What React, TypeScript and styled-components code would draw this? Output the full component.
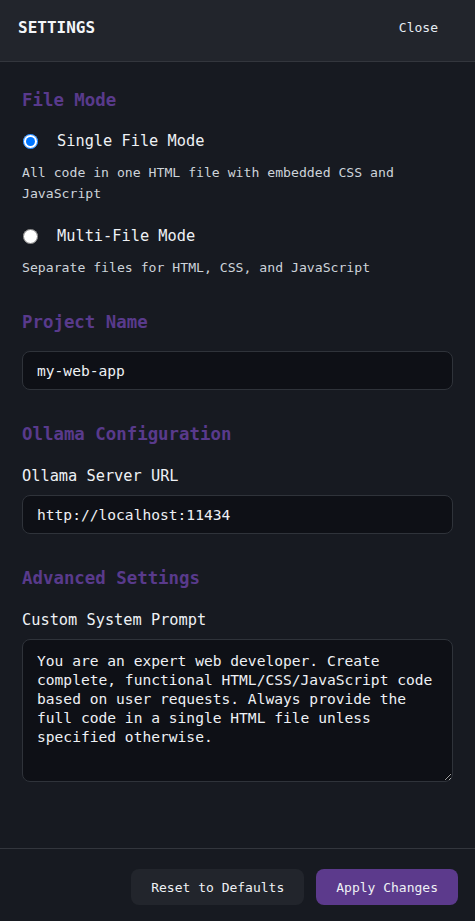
import React, { useState } from "react";
import styled, { createGlobalStyle } from "styled-components";

const Global = createGlobalStyle`
  html, body { margin: 0; padding: 0; background: #171a21; }
  body { font-family: "DejaVu Sans Mono", "Liberation Mono", monospace; }
  * { box-sizing: border-box; }
`;

const Shell = styled.div`
  display: flex;
  flex-direction: column;
  height: 100vh;
  background: #171a21;
  color: #e6edf3;
`;

const Header = styled.header`
  display: flex;
  align-items: center;
  justify-content: space-between;
  height: 62px;
  padding: 0 18px;
  background: #22252c;
  border-bottom: 1px solid #33363d;
  flex-shrink: 0;
`;

const HeaderTitle = styled.h1`
  margin: 0;
  font-size: 16px;
  font-weight: 700;
  letter-spacing: 0;
  color: #f3f5f8;
  transform: translateY(-3px);
`;

const CloseButton = styled.button`
  background: transparent;
  border: none;
  color: #e6edf3;
  font-family: inherit;
  font-size: 13px;
  padding: 6px 19px;
  cursor: pointer;
  transform: translateY(-3px);
`;

const Body = styled.main`
  flex: 1;
  overflow: auto;
  padding: 27px 22px 24px;
  display: flex;
  flex-direction: column;
`;

const Section = styled.section`
  display: flex;
  flex-direction: column;
  & + & { margin-top: 33px; }
`;

const SectionTitle = styled.h2`
  margin: 0 0 18px;
  font-size: 17.4px;
  line-height: 22px;
  font-weight: 700;
  color: #593a8c;
`;

const RadioRow = styled.label`
  display: flex;
  align-items: center;
  gap: 19px;
  height: 24px;
  font-size: 15.3px;
  color: #eef1f5;
  cursor: pointer;
`;

const Radio = styled.input`
  width: 15px;
  height: 15px;
  margin: 0 0 0 1px;
  accent-color: #0075ff;
`;

const Description = styled.p<{ $last?: boolean }>`
  margin: 9px 0 ${(p) => (p.$last ? "0" : "20px")};
  font-size: 13.15px;
  line-height: 21px;
  color: #cdd3da;
`;

const FieldLabel = styled.label`
  display: block;
  margin: 3px 0 9px;
  font-size: 15.3px;
  line-height: 20px;
  color: #eef1f5;
`;

const TextInput = styled.input`
  width: 100%;
  height: 39px;
  padding: 0 14px;
  background: #0e1016;
  border: 1px solid #2f333a;
  border-radius: 8px;
  color: #eef1f5;
  font-family: inherit;
  font-size: 14.6px;
  outline: none;
`;

const TextArea = styled.textarea`
  width: 100%;
  height: 143px;
  padding: 11px 14px;
  background: #0e1016;
  border: 1px solid #2f333a;
  border-radius: 8px;
  color: #eef1f5;
  font-family: inherit;
  font-size: 14.6px;
  line-height: 19px;
  outline: none;
  resize: vertical;
  display: block;
`;

const Footer = styled.footer`
  flex-shrink: 0;
  display: flex;
  justify-content: flex-end;
  gap: 12px;
  padding: 20px 17px 16px;
  border-top: 1px solid #33363d;
  background: #171a21;
`;

const Button = styled.button<{ $primary?: boolean }>`
  height: 36px;
  padding: 0 20px;
  border: none;
  border-radius: 8px;
  font-family: inherit;
  font-size: 13px;
  color: #eef1f5;
  background: ${(p) => (p.$primary ? "#5c3a8c" : "#22252c")};
  cursor: pointer;
`;

const DEFAULT_PROMPT =
  "You are an expert web developer. Create complete, functional HTML/CSS/JavaScript code based on user requests. Always provide the full code in a single HTML file unless specified otherwise.";

export default function App() {
  const [mode, setMode] = useState<"single" | "multi">("single");
  const [project, setProject] = useState("my-web-app");
  const [url, setUrl] = useState("http://localhost:11434");
  const [prompt, setPrompt] = useState(DEFAULT_PROMPT);

  return (
    <>
      <Global />
      <Shell>
        <Header>
          <HeaderTitle>SETTINGS</HeaderTitle>
          <CloseButton>Close</CloseButton>
        </Header>
        <Body>
          <Section>
            <SectionTitle>File Mode</SectionTitle>
            <RadioRow>
              <Radio
                type="radio"
                name="mode"
                checked={mode === "single"}
                onChange={() => setMode("single")}
              />
              Single File Mode
            </RadioRow>
            <Description>
              All code in one HTML file with embedded CSS and JavaScript
            </Description>
            <RadioRow>
              <Radio
                type="radio"
                name="mode"
                checked={mode === "multi"}
                onChange={() => setMode("multi")}
              />
              Multi-File Mode
            </RadioRow>
            <Description $last>
              Separate files for HTML, CSS, and JavaScript
            </Description>
          </Section>
          <Section>
            <SectionTitle>Project Name</SectionTitle>
            <TextInput value={project} onChange={(e) => setProject(e.target.value)} />
          </Section>
          <Section>
            <SectionTitle>Ollama Configuration</SectionTitle>
            <FieldLabel>Ollama Server URL</FieldLabel>
            <TextInput value={url} onChange={(e) => setUrl(e.target.value)} />
          </Section>
          <Section>
            <SectionTitle>Advanced Settings</SectionTitle>
            <FieldLabel>Custom System Prompt</FieldLabel>
            <TextArea value={prompt} onChange={(e) => setPrompt(e.target.value)} />
          </Section>
        </Body>
        <Footer>
          <Button>Reset to Defaults</Button>
          <Button $primary>Apply Changes</Button>
        </Footer>
      </Shell>
    </>
  );
}
